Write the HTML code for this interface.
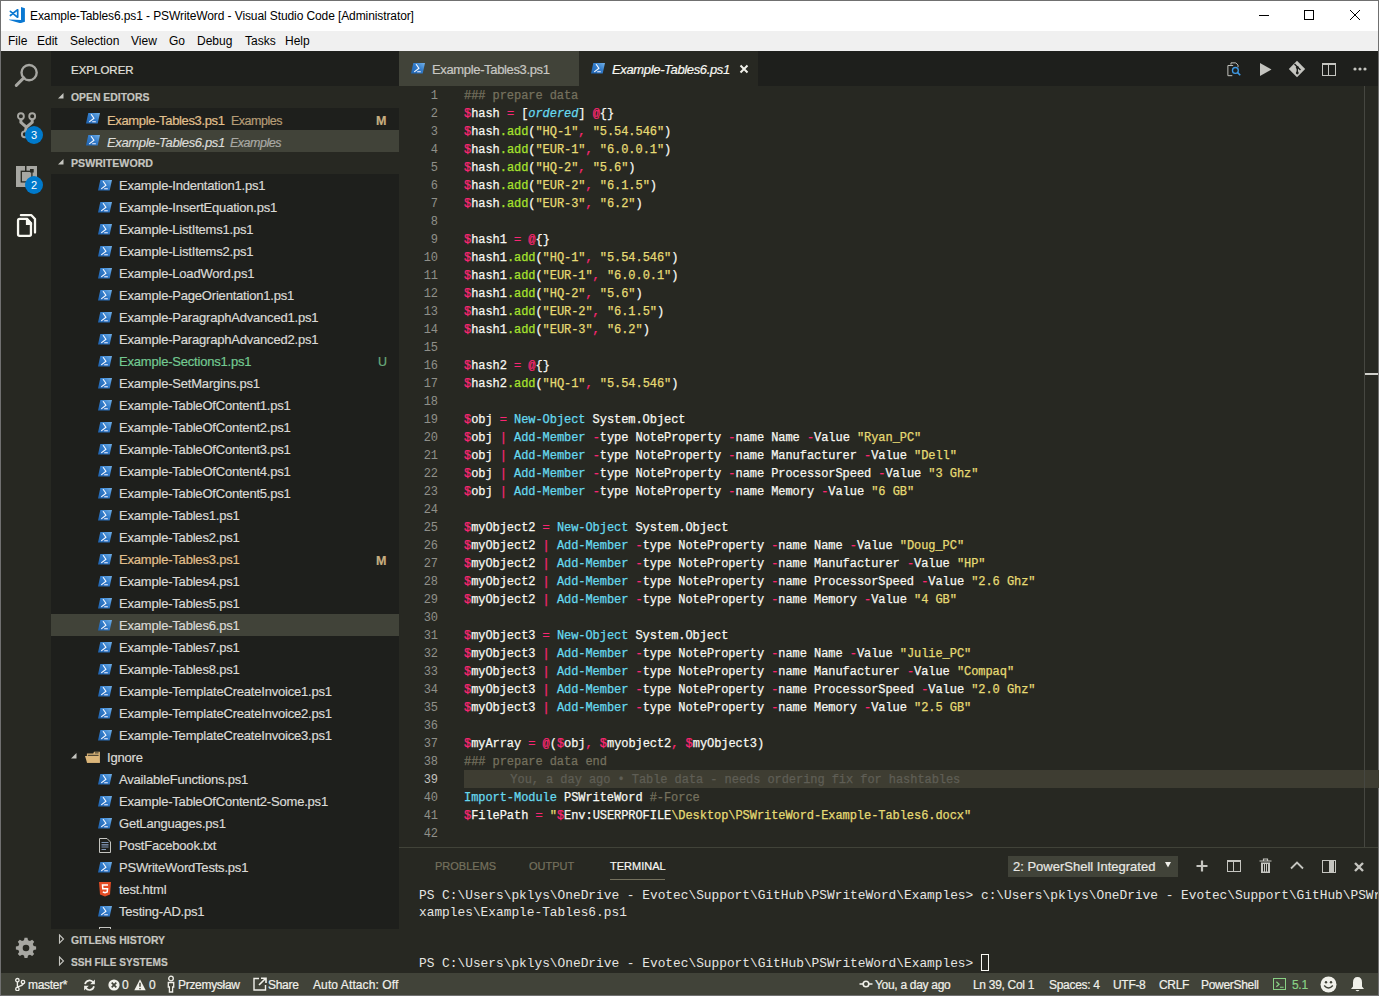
<!DOCTYPE html>
<html><head><meta charset="utf-8">
<style>
*{margin:0;padding:0;box-sizing:border-box}
html,body{width:1379px;height:996px;overflow:hidden;background:#707070;font-family:"Liberation Sans",sans-serif}
.ab{position:absolute}
.t{position:absolute;white-space:pre;font-family:"Liberation Sans",sans-serif;-webkit-text-stroke:0.2px currentColor}
.m{position:absolute;white-space:pre;font-family:"Liberation Mono",monospace;-webkit-text-stroke:0.25px currentColor}
svg{display:block}
#title{left:1px;top:1px;width:1377px;height:30px;background:#fff}
#menu{left:1px;top:31px;width:1377px;height:20px;background:#f0f0f0}
#act{left:1px;top:51px;width:50px;height:922px;background:#272822}
#side{left:51px;top:51px;width:348px;height:922px;background:#1e1f1c}
#tabs{left:399px;top:51px;width:979px;height:35px;background:#1e1f1c}
#editor{left:399px;top:86px;width:979px;height:761px;background:#272822;overflow:hidden}
#panel{left:399px;top:847px;width:979px;height:126px;background:#272822;border-top:1px solid #414339}
#status{left:1px;top:973px;width:1377px;height:22px;background:#414339}
.c .p{color:#f92672}.c .g{color:#a6e22e}.c .y{color:#e6db74}.c .b{color:#66d9ef}.c .cm{color:#75715e}.c .i{font-style:italic}
</style></head><body>
<div id="title" class="ab"></div>
<div id="menu" class="ab"></div>
<div id="act" class="ab"></div>
<div id="side" class="ab"></div>
<div id="tabs" class="ab"></div>
<div id="editor" class="ab"></div>
<div id="panel" class="ab"></div>
<div id="status" class="ab"></div>

<div class="ab" style="left:6px;top:4px"><svg width="24" height="22" viewBox="0 0 24 22"><polygon points="15,3 18.9,4.3 18.9,17.7 15,18.9" fill="#0a78d2"/><polygon points="3.1,15.4 15,15.9 15,18.9 13.5,18.9 3.1,15.9" fill="#0a78d2"/><path d="M4.4 7.3 L11.3 13.1 M4.4 11.5 L11.3 5.8 M11.7 5.8 V13.1" fill="none" stroke="#0a78d2" stroke-width="1.7" stroke-linecap="round"/></svg></div>
<div class="t" style="left:30px;top:5.84px;font-size:12px;line-height:20px;color:#000;font-weight:normal;font-style:normal;letter-spacing:-0.1px;-webkit-text-stroke:0">Example-Tables6.ps1 - PSWriteWord - Visual Studio Code [Administrator]</div>
<div class="ab" style="left:1259px;top:15px;width:10px;height:1px;background:#000"></div>
<div class="ab" style="left:1304px;top:10px;width:10px;height:10px;border:1px solid #000"></div>
<div class="ab" style="left:1349px;top:9px"><svg width="12" height="12" viewBox="0 0 12 12"><path d="M1 1 L11 11 M11 1 L1 11" stroke="#000" stroke-width="1"/></svg></div>
<div class="t" style="left:8px;top:30.84px;font-size:12px;line-height:20px;color:#000;font-weight:normal;font-style:normal;letter-spacing:0px;-webkit-text-stroke:0">File</div>
<div class="t" style="left:37px;top:30.84px;font-size:12px;line-height:20px;color:#000;font-weight:normal;font-style:normal;letter-spacing:0px;-webkit-text-stroke:0">Edit</div>
<div class="t" style="left:70px;top:30.84px;font-size:12px;line-height:20px;color:#000;font-weight:normal;font-style:normal;letter-spacing:0px;-webkit-text-stroke:0">Selection</div>
<div class="t" style="left:131px;top:30.84px;font-size:12px;line-height:20px;color:#000;font-weight:normal;font-style:normal;letter-spacing:0px;-webkit-text-stroke:0">View</div>
<div class="t" style="left:169px;top:30.84px;font-size:12px;line-height:20px;color:#000;font-weight:normal;font-style:normal;letter-spacing:0px;-webkit-text-stroke:0">Go</div>
<div class="t" style="left:197px;top:30.84px;font-size:12px;line-height:20px;color:#000;font-weight:normal;font-style:normal;letter-spacing:0px;-webkit-text-stroke:0">Debug</div>
<div class="t" style="left:245px;top:30.84px;font-size:12px;line-height:20px;color:#000;font-weight:normal;font-style:normal;letter-spacing:0px;-webkit-text-stroke:0">Tasks</div>
<div class="t" style="left:285px;top:30.84px;font-size:12px;line-height:20px;color:#000;font-weight:normal;font-style:normal;letter-spacing:0px;-webkit-text-stroke:0">Help</div>
<div class="ab" style="left:14px;top:63px"><svg width="24" height="24" viewBox="0 0 24 24"><circle cx="15.1" cy="9.6" r="7.6" fill="none" stroke="#a7a7a2" stroke-width="2.4"/><line x1="9.8" y1="14.9" x2="2.3" y2="22.4" stroke="#a7a7a2" stroke-width="2.9" stroke-linecap="round"/></svg></div>
<div class="ab" style="left:14px;top:108px"><svg width="24" height="32" viewBox="0 0 24 32"><circle cx="6.9" cy="8.2" r="2.95" fill="none" stroke="#a7a7a2" stroke-width="1.9"/><circle cx="18.2" cy="8.2" r="2.95" fill="none" stroke="#a7a7a2" stroke-width="1.9"/><circle cx="10.8" cy="26.3" r="2.95" fill="none" stroke="#a7a7a2" stroke-width="1.9"/><path d="M6.9 10.8 V14.3 L12.4 19.2 L18.2 14.3 V10.8 M12.4 19 L11.3 23.5" fill="none" stroke="#a7a7a2" stroke-width="3"/></svg></div>
<div class="ab" style="left:25px;top:126px;width:18px;height:18px;border-radius:9px;background:#007acc;color:#fff;font:11px/18px Liberation Sans,sans-serif;text-align:center">3</div>
<div class="ab" style="left:16px;top:166px"><svg width="21" height="21" viewBox="0 0 21 21"><rect x="0" y="0" width="21" height="21" fill="#a7a7a2"/><rect x="9" y="0" width="1.5" height="5" fill="#272822"/><rect x="5.3" y="5.3" width="10.6" height="10.6" fill="#a7a7a2" stroke="#272822" stroke-width="1.3"/><rect x="14" y="3" width="3.7" height="3.5" fill="#272822"/></svg></div>
<div class="ab" style="left:25px;top:176px;width:18px;height:18px;border-radius:9px;background:#007acc;color:#fff;font:11px/18px Liberation Sans,sans-serif;text-align:center">2</div>
<div class="ab" style="left:11px;top:211px"><svg width="30" height="30" viewBox="0 0 30 30"><path d="M9.9 4.2 H20.4 L24 8 V21.5" fill="none" stroke="#f8f8f2" stroke-width="2.3" stroke-linecap="round" stroke-linejoin="round"/><path d="M7.05 9.5 Q7.05 7.95 8.6 7.95 H16 L19.95 12.3 V23.3 Q19.95 24.85 18.4 24.85 H8.6 Q7.05 24.85 7.05 23.3 Z" fill="none" stroke="#f8f8f2" stroke-width="2.3"/><polygon points="14.9,6.9 16.5,6.9 21.1,12 21.1,14 14.9,14" fill="#f8f8f2"/></svg></div>
<div class="ab" style="left:15px;top:937px"><svg width="22" height="22" viewBox="0 0 22 22"><g transform="translate(11,11)"><path d="M-1.6 -10 H1.6 L2.2 -7.3 L4.3 -6.4 L6.7 -7.9 L8.9 -5.7 L7.4 -3.3 L8.3 -1.2 L11 -0.6 V2.6 L8.3 3.2 L7.4 5.3 L8.9 7.7 L6.7 9.9 L4.3 8.4 L2.2 9.3 L1.6 12 H-1.6 L-2.2 9.3 L-4.3 8.4 L-6.7 9.9 L-8.9 7.7 L-7.4 5.3 L-8.3 3.2 L-11 2.6 V-0.6 L-8.3 -1.2 L-7.4 -3.3 L-8.9 -5.7 L-6.7 -7.9 L-4.3 -6.4 L-2.2 -7.3 Z" fill="#a7a7a2" transform="translate(0,-1) scale(0.92)"/><circle cx="0" cy="0" r="3.3" fill="#272822"/></g></svg></div>
<div class="t" style="left:71px;top:60.02px;font-size:11.5px;line-height:20px;color:#e0e0dc;font-weight:normal;font-style:normal;letter-spacing:0px;-webkit-text-stroke:0transform:scaleX(0.8);transform-origin:0 0;">EXPLORER</div>
<div class="ab" style="left:51px;top:86px;width:348px;height:22px;background:#272822"></div>
<div class="ab" style="left:51px;top:152px;width:348px;height:22px;background:#272822"></div>
<div class="ab" style="left:51px;top:929px;width:348px;height:44px;background:#272822"></div>
<div class="ab" style="left:57px;top:92px"><svg width="8" height="8" viewBox="0 0 8 8"><polygon points="6.5,1 6.5,6.5 1,6.5" fill="#c5c5c0"/></svg></div>
<div class="t" style="left:71px;top:87.19px;font-size:11px;line-height:20px;color:#c5c5c0;font-weight:bold;font-style:normal;letter-spacing:0px;transform:scaleX(0.945);transform-origin:0 0;">OPEN EDITORS</div>
<div class="ab" style="left:57px;top:158px"><svg width="8" height="8" viewBox="0 0 8 8"><polygon points="6.5,1 6.5,6.5 1,6.5" fill="#c5c5c0"/></svg></div>
<div class="t" style="left:71px;top:153.19px;font-size:11px;line-height:20px;color:#c5c5c0;font-weight:bold;font-style:normal;letter-spacing:0px;transform:scaleX(0.965);transform-origin:0 0;">PSWRITEWORD</div>
<div class="ab" style="left:58px;top:934px"><svg width="8" height="10" viewBox="0 0 8 10"><polygon points="1.5,1 5.5,5 1.5,9" fill="none" stroke="#c5c5c0" stroke-width="1.1"/></svg></div>
<div class="t" style="left:71px;top:930.19px;font-size:11px;line-height:20px;color:#c5c5c0;font-weight:bold;font-style:normal;letter-spacing:0px;transform:scaleX(0.95);transform-origin:0 0;">GITLENS HISTORY</div>
<div class="ab" style="left:58px;top:956px"><svg width="8" height="10" viewBox="0 0 8 10"><polygon points="1.5,1 5.5,5 1.5,9" fill="none" stroke="#c5c5c0" stroke-width="1.1"/></svg></div>
<div class="t" style="left:71px;top:952.19px;font-size:11px;line-height:20px;color:#c5c5c0;font-weight:bold;font-style:normal;letter-spacing:0px;transform:scaleX(0.92);transform-origin:0 0;">SSH FILE SYSTEMS</div>
<div class="ab" style="left:86px;top:113px"><svg class="ps" width="15" height="12" viewBox="0 0 15 12"><defs><linearGradient id="g1" x1="0" y1="1" x2="1" y2="0"><stop offset="0" stop-color="#1f62ae"/><stop offset="0.55" stop-color="#327ccb"/><stop offset="1" stop-color="#74b2e8"/></linearGradient></defs><polygon points="2.3,0 14,0 11.7,10.6 0,10.6" fill="url(#g1)"/><polyline points="5.3,1.5 8,5.3 3.6,8.6" fill="none" stroke="#f4f8ff" stroke-width="1.15" stroke-linecap="round" stroke-linejoin="round"/><line x1="6.6" y1="8.8" x2="9.4" y2="8.8" stroke="#eef" stroke-width="1.1" stroke-linecap="round"/></svg></div>
<div class="t" style="left:107px;top:110.50px;font-size:13px;line-height:20px;color:#e2c08d;font-weight:normal;font-style:normal;letter-spacing:-0.35px;">Example-Tables3.ps1</div>
<div class="t" style="left:231px;top:110.67px;font-size:12.5px;line-height:20px;color:#b59c76;font-weight:normal;font-style:normal;letter-spacing:-0.5px;">Examples</div>
<div class="t" style="left:376px;top:110.67px;font-size:12.5px;line-height:20px;color:#c9ad80;font-weight:bold;font-style:normal;letter-spacing:0px;">M</div>
<div class="ab" style="left:51px;top:130px;width:348px;height:22px;background:#414339"></div>
<div class="ab" style="left:86px;top:135px"><svg class="ps" width="15" height="12" viewBox="0 0 15 12"><defs><linearGradient id="g2" x1="0" y1="1" x2="1" y2="0"><stop offset="0" stop-color="#1f62ae"/><stop offset="0.55" stop-color="#327ccb"/><stop offset="1" stop-color="#74b2e8"/></linearGradient></defs><polygon points="2.3,0 14,0 11.7,10.6 0,10.6" fill="url(#g2)"/><polyline points="5.3,1.5 8,5.3 3.6,8.6" fill="none" stroke="#f4f8ff" stroke-width="1.15" stroke-linecap="round" stroke-linejoin="round"/><line x1="6.6" y1="8.8" x2="9.4" y2="8.8" stroke="#eef" stroke-width="1.1" stroke-linecap="round"/></svg></div>
<div class="t" style="left:107px;top:132.50px;font-size:13px;line-height:20px;color:#dcdcd8;font-weight:normal;font-style:italic;letter-spacing:-0.35px;">Example-Tables6.ps1</div>
<div class="t" style="left:230px;top:132.67px;font-size:12.5px;line-height:20px;color:#a9a9a4;font-weight:normal;font-style:italic;letter-spacing:-0.5px;">Examples</div>
<div class="ab" style="left:51px;top:174px;width:348px;height:755px;overflow:hidden">
<div class="ab" style="left:0px;top:440px;width:348px;height:22px;background:#414339"></div>
</div>
<div class="ab" style="left:98px;top:180px"><svg class="ps" width="15" height="12" viewBox="0 0 15 12"><defs><linearGradient id="g3" x1="0" y1="1" x2="1" y2="0"><stop offset="0" stop-color="#1f62ae"/><stop offset="0.55" stop-color="#327ccb"/><stop offset="1" stop-color="#74b2e8"/></linearGradient></defs><polygon points="2.3,0 14,0 11.7,10.6 0,10.6" fill="url(#g3)"/><polyline points="5.3,1.5 8,5.3 3.6,8.6" fill="none" stroke="#f4f8ff" stroke-width="1.15" stroke-linecap="round" stroke-linejoin="round"/><line x1="6.6" y1="8.8" x2="9.4" y2="8.8" stroke="#eef" stroke-width="1.1" stroke-linecap="round"/></svg></div>
<div class="t" style="left:119px;top:175.80px;font-size:13px;line-height:20px;color:#dadad6;font-weight:normal;font-style:normal;letter-spacing:-0.2px;">Example-Indentation1.ps1</div>
<div class="ab" style="left:98px;top:202px"><svg class="ps" width="15" height="12" viewBox="0 0 15 12"><defs><linearGradient id="g4" x1="0" y1="1" x2="1" y2="0"><stop offset="0" stop-color="#1f62ae"/><stop offset="0.55" stop-color="#327ccb"/><stop offset="1" stop-color="#74b2e8"/></linearGradient></defs><polygon points="2.3,0 14,0 11.7,10.6 0,10.6" fill="url(#g4)"/><polyline points="5.3,1.5 8,5.3 3.6,8.6" fill="none" stroke="#f4f8ff" stroke-width="1.15" stroke-linecap="round" stroke-linejoin="round"/><line x1="6.6" y1="8.8" x2="9.4" y2="8.8" stroke="#eef" stroke-width="1.1" stroke-linecap="round"/></svg></div>
<div class="t" style="left:119px;top:197.80px;font-size:13px;line-height:20px;color:#dadad6;font-weight:normal;font-style:normal;letter-spacing:-0.2px;">Example-InsertEquation.ps1</div>
<div class="ab" style="left:98px;top:224px"><svg class="ps" width="15" height="12" viewBox="0 0 15 12"><defs><linearGradient id="g5" x1="0" y1="1" x2="1" y2="0"><stop offset="0" stop-color="#1f62ae"/><stop offset="0.55" stop-color="#327ccb"/><stop offset="1" stop-color="#74b2e8"/></linearGradient></defs><polygon points="2.3,0 14,0 11.7,10.6 0,10.6" fill="url(#g5)"/><polyline points="5.3,1.5 8,5.3 3.6,8.6" fill="none" stroke="#f4f8ff" stroke-width="1.15" stroke-linecap="round" stroke-linejoin="round"/><line x1="6.6" y1="8.8" x2="9.4" y2="8.8" stroke="#eef" stroke-width="1.1" stroke-linecap="round"/></svg></div>
<div class="t" style="left:119px;top:219.80px;font-size:13px;line-height:20px;color:#dadad6;font-weight:normal;font-style:normal;letter-spacing:-0.2px;">Example-ListItems1.ps1</div>
<div class="ab" style="left:98px;top:246px"><svg class="ps" width="15" height="12" viewBox="0 0 15 12"><defs><linearGradient id="g6" x1="0" y1="1" x2="1" y2="0"><stop offset="0" stop-color="#1f62ae"/><stop offset="0.55" stop-color="#327ccb"/><stop offset="1" stop-color="#74b2e8"/></linearGradient></defs><polygon points="2.3,0 14,0 11.7,10.6 0,10.6" fill="url(#g6)"/><polyline points="5.3,1.5 8,5.3 3.6,8.6" fill="none" stroke="#f4f8ff" stroke-width="1.15" stroke-linecap="round" stroke-linejoin="round"/><line x1="6.6" y1="8.8" x2="9.4" y2="8.8" stroke="#eef" stroke-width="1.1" stroke-linecap="round"/></svg></div>
<div class="t" style="left:119px;top:241.80px;font-size:13px;line-height:20px;color:#dadad6;font-weight:normal;font-style:normal;letter-spacing:-0.2px;">Example-ListItems2.ps1</div>
<div class="ab" style="left:98px;top:268px"><svg class="ps" width="15" height="12" viewBox="0 0 15 12"><defs><linearGradient id="g7" x1="0" y1="1" x2="1" y2="0"><stop offset="0" stop-color="#1f62ae"/><stop offset="0.55" stop-color="#327ccb"/><stop offset="1" stop-color="#74b2e8"/></linearGradient></defs><polygon points="2.3,0 14,0 11.7,10.6 0,10.6" fill="url(#g7)"/><polyline points="5.3,1.5 8,5.3 3.6,8.6" fill="none" stroke="#f4f8ff" stroke-width="1.15" stroke-linecap="round" stroke-linejoin="round"/><line x1="6.6" y1="8.8" x2="9.4" y2="8.8" stroke="#eef" stroke-width="1.1" stroke-linecap="round"/></svg></div>
<div class="t" style="left:119px;top:263.80px;font-size:13px;line-height:20px;color:#dadad6;font-weight:normal;font-style:normal;letter-spacing:-0.2px;">Example-LoadWord.ps1</div>
<div class="ab" style="left:98px;top:290px"><svg class="ps" width="15" height="12" viewBox="0 0 15 12"><defs><linearGradient id="g8" x1="0" y1="1" x2="1" y2="0"><stop offset="0" stop-color="#1f62ae"/><stop offset="0.55" stop-color="#327ccb"/><stop offset="1" stop-color="#74b2e8"/></linearGradient></defs><polygon points="2.3,0 14,0 11.7,10.6 0,10.6" fill="url(#g8)"/><polyline points="5.3,1.5 8,5.3 3.6,8.6" fill="none" stroke="#f4f8ff" stroke-width="1.15" stroke-linecap="round" stroke-linejoin="round"/><line x1="6.6" y1="8.8" x2="9.4" y2="8.8" stroke="#eef" stroke-width="1.1" stroke-linecap="round"/></svg></div>
<div class="t" style="left:119px;top:285.80px;font-size:13px;line-height:20px;color:#dadad6;font-weight:normal;font-style:normal;letter-spacing:-0.2px;">Example-PageOrientation1.ps1</div>
<div class="ab" style="left:98px;top:312px"><svg class="ps" width="15" height="12" viewBox="0 0 15 12"><defs><linearGradient id="g9" x1="0" y1="1" x2="1" y2="0"><stop offset="0" stop-color="#1f62ae"/><stop offset="0.55" stop-color="#327ccb"/><stop offset="1" stop-color="#74b2e8"/></linearGradient></defs><polygon points="2.3,0 14,0 11.7,10.6 0,10.6" fill="url(#g9)"/><polyline points="5.3,1.5 8,5.3 3.6,8.6" fill="none" stroke="#f4f8ff" stroke-width="1.15" stroke-linecap="round" stroke-linejoin="round"/><line x1="6.6" y1="8.8" x2="9.4" y2="8.8" stroke="#eef" stroke-width="1.1" stroke-linecap="round"/></svg></div>
<div class="t" style="left:119px;top:307.80px;font-size:13px;line-height:20px;color:#dadad6;font-weight:normal;font-style:normal;letter-spacing:-0.2px;">Example-ParagraphAdvanced1.ps1</div>
<div class="ab" style="left:98px;top:334px"><svg class="ps" width="15" height="12" viewBox="0 0 15 12"><defs><linearGradient id="g10" x1="0" y1="1" x2="1" y2="0"><stop offset="0" stop-color="#1f62ae"/><stop offset="0.55" stop-color="#327ccb"/><stop offset="1" stop-color="#74b2e8"/></linearGradient></defs><polygon points="2.3,0 14,0 11.7,10.6 0,10.6" fill="url(#g10)"/><polyline points="5.3,1.5 8,5.3 3.6,8.6" fill="none" stroke="#f4f8ff" stroke-width="1.15" stroke-linecap="round" stroke-linejoin="round"/><line x1="6.6" y1="8.8" x2="9.4" y2="8.8" stroke="#eef" stroke-width="1.1" stroke-linecap="round"/></svg></div>
<div class="t" style="left:119px;top:329.80px;font-size:13px;line-height:20px;color:#dadad6;font-weight:normal;font-style:normal;letter-spacing:-0.2px;">Example-ParagraphAdvanced2.ps1</div>
<div class="ab" style="left:98px;top:356px"><svg class="ps" width="15" height="12" viewBox="0 0 15 12"><defs><linearGradient id="g11" x1="0" y1="1" x2="1" y2="0"><stop offset="0" stop-color="#1f62ae"/><stop offset="0.55" stop-color="#327ccb"/><stop offset="1" stop-color="#74b2e8"/></linearGradient></defs><polygon points="2.3,0 14,0 11.7,10.6 0,10.6" fill="url(#g11)"/><polyline points="5.3,1.5 8,5.3 3.6,8.6" fill="none" stroke="#f4f8ff" stroke-width="1.15" stroke-linecap="round" stroke-linejoin="round"/><line x1="6.6" y1="8.8" x2="9.4" y2="8.8" stroke="#eef" stroke-width="1.1" stroke-linecap="round"/></svg></div>
<div class="t" style="left:119px;top:351.80px;font-size:13px;line-height:20px;color:#73c991;font-weight:normal;font-style:normal;letter-spacing:-0.2px;">Example-Sections1.ps1</div>
<div class="ab" style="left:98px;top:378px"><svg class="ps" width="15" height="12" viewBox="0 0 15 12"><defs><linearGradient id="g12" x1="0" y1="1" x2="1" y2="0"><stop offset="0" stop-color="#1f62ae"/><stop offset="0.55" stop-color="#327ccb"/><stop offset="1" stop-color="#74b2e8"/></linearGradient></defs><polygon points="2.3,0 14,0 11.7,10.6 0,10.6" fill="url(#g12)"/><polyline points="5.3,1.5 8,5.3 3.6,8.6" fill="none" stroke="#f4f8ff" stroke-width="1.15" stroke-linecap="round" stroke-linejoin="round"/><line x1="6.6" y1="8.8" x2="9.4" y2="8.8" stroke="#eef" stroke-width="1.1" stroke-linecap="round"/></svg></div>
<div class="t" style="left:119px;top:373.80px;font-size:13px;line-height:20px;color:#dadad6;font-weight:normal;font-style:normal;letter-spacing:-0.2px;">Example-SetMargins.ps1</div>
<div class="ab" style="left:98px;top:400px"><svg class="ps" width="15" height="12" viewBox="0 0 15 12"><defs><linearGradient id="g13" x1="0" y1="1" x2="1" y2="0"><stop offset="0" stop-color="#1f62ae"/><stop offset="0.55" stop-color="#327ccb"/><stop offset="1" stop-color="#74b2e8"/></linearGradient></defs><polygon points="2.3,0 14,0 11.7,10.6 0,10.6" fill="url(#g13)"/><polyline points="5.3,1.5 8,5.3 3.6,8.6" fill="none" stroke="#f4f8ff" stroke-width="1.15" stroke-linecap="round" stroke-linejoin="round"/><line x1="6.6" y1="8.8" x2="9.4" y2="8.8" stroke="#eef" stroke-width="1.1" stroke-linecap="round"/></svg></div>
<div class="t" style="left:119px;top:395.80px;font-size:13px;line-height:20px;color:#dadad6;font-weight:normal;font-style:normal;letter-spacing:-0.2px;">Example-TableOfContent1.ps1</div>
<div class="ab" style="left:98px;top:422px"><svg class="ps" width="15" height="12" viewBox="0 0 15 12"><defs><linearGradient id="g14" x1="0" y1="1" x2="1" y2="0"><stop offset="0" stop-color="#1f62ae"/><stop offset="0.55" stop-color="#327ccb"/><stop offset="1" stop-color="#74b2e8"/></linearGradient></defs><polygon points="2.3,0 14,0 11.7,10.6 0,10.6" fill="url(#g14)"/><polyline points="5.3,1.5 8,5.3 3.6,8.6" fill="none" stroke="#f4f8ff" stroke-width="1.15" stroke-linecap="round" stroke-linejoin="round"/><line x1="6.6" y1="8.8" x2="9.4" y2="8.8" stroke="#eef" stroke-width="1.1" stroke-linecap="round"/></svg></div>
<div class="t" style="left:119px;top:417.80px;font-size:13px;line-height:20px;color:#dadad6;font-weight:normal;font-style:normal;letter-spacing:-0.2px;">Example-TableOfContent2.ps1</div>
<div class="ab" style="left:98px;top:444px"><svg class="ps" width="15" height="12" viewBox="0 0 15 12"><defs><linearGradient id="g15" x1="0" y1="1" x2="1" y2="0"><stop offset="0" stop-color="#1f62ae"/><stop offset="0.55" stop-color="#327ccb"/><stop offset="1" stop-color="#74b2e8"/></linearGradient></defs><polygon points="2.3,0 14,0 11.7,10.6 0,10.6" fill="url(#g15)"/><polyline points="5.3,1.5 8,5.3 3.6,8.6" fill="none" stroke="#f4f8ff" stroke-width="1.15" stroke-linecap="round" stroke-linejoin="round"/><line x1="6.6" y1="8.8" x2="9.4" y2="8.8" stroke="#eef" stroke-width="1.1" stroke-linecap="round"/></svg></div>
<div class="t" style="left:119px;top:439.80px;font-size:13px;line-height:20px;color:#dadad6;font-weight:normal;font-style:normal;letter-spacing:-0.2px;">Example-TableOfContent3.ps1</div>
<div class="ab" style="left:98px;top:466px"><svg class="ps" width="15" height="12" viewBox="0 0 15 12"><defs><linearGradient id="g16" x1="0" y1="1" x2="1" y2="0"><stop offset="0" stop-color="#1f62ae"/><stop offset="0.55" stop-color="#327ccb"/><stop offset="1" stop-color="#74b2e8"/></linearGradient></defs><polygon points="2.3,0 14,0 11.7,10.6 0,10.6" fill="url(#g16)"/><polyline points="5.3,1.5 8,5.3 3.6,8.6" fill="none" stroke="#f4f8ff" stroke-width="1.15" stroke-linecap="round" stroke-linejoin="round"/><line x1="6.6" y1="8.8" x2="9.4" y2="8.8" stroke="#eef" stroke-width="1.1" stroke-linecap="round"/></svg></div>
<div class="t" style="left:119px;top:461.80px;font-size:13px;line-height:20px;color:#dadad6;font-weight:normal;font-style:normal;letter-spacing:-0.2px;">Example-TableOfContent4.ps1</div>
<div class="ab" style="left:98px;top:488px"><svg class="ps" width="15" height="12" viewBox="0 0 15 12"><defs><linearGradient id="g17" x1="0" y1="1" x2="1" y2="0"><stop offset="0" stop-color="#1f62ae"/><stop offset="0.55" stop-color="#327ccb"/><stop offset="1" stop-color="#74b2e8"/></linearGradient></defs><polygon points="2.3,0 14,0 11.7,10.6 0,10.6" fill="url(#g17)"/><polyline points="5.3,1.5 8,5.3 3.6,8.6" fill="none" stroke="#f4f8ff" stroke-width="1.15" stroke-linecap="round" stroke-linejoin="round"/><line x1="6.6" y1="8.8" x2="9.4" y2="8.8" stroke="#eef" stroke-width="1.1" stroke-linecap="round"/></svg></div>
<div class="t" style="left:119px;top:483.80px;font-size:13px;line-height:20px;color:#dadad6;font-weight:normal;font-style:normal;letter-spacing:-0.2px;">Example-TableOfContent5.ps1</div>
<div class="ab" style="left:98px;top:510px"><svg class="ps" width="15" height="12" viewBox="0 0 15 12"><defs><linearGradient id="g18" x1="0" y1="1" x2="1" y2="0"><stop offset="0" stop-color="#1f62ae"/><stop offset="0.55" stop-color="#327ccb"/><stop offset="1" stop-color="#74b2e8"/></linearGradient></defs><polygon points="2.3,0 14,0 11.7,10.6 0,10.6" fill="url(#g18)"/><polyline points="5.3,1.5 8,5.3 3.6,8.6" fill="none" stroke="#f4f8ff" stroke-width="1.15" stroke-linecap="round" stroke-linejoin="round"/><line x1="6.6" y1="8.8" x2="9.4" y2="8.8" stroke="#eef" stroke-width="1.1" stroke-linecap="round"/></svg></div>
<div class="t" style="left:119px;top:505.80px;font-size:13px;line-height:20px;color:#dadad6;font-weight:normal;font-style:normal;letter-spacing:-0.2px;">Example-Tables1.ps1</div>
<div class="ab" style="left:98px;top:532px"><svg class="ps" width="15" height="12" viewBox="0 0 15 12"><defs><linearGradient id="g19" x1="0" y1="1" x2="1" y2="0"><stop offset="0" stop-color="#1f62ae"/><stop offset="0.55" stop-color="#327ccb"/><stop offset="1" stop-color="#74b2e8"/></linearGradient></defs><polygon points="2.3,0 14,0 11.7,10.6 0,10.6" fill="url(#g19)"/><polyline points="5.3,1.5 8,5.3 3.6,8.6" fill="none" stroke="#f4f8ff" stroke-width="1.15" stroke-linecap="round" stroke-linejoin="round"/><line x1="6.6" y1="8.8" x2="9.4" y2="8.8" stroke="#eef" stroke-width="1.1" stroke-linecap="round"/></svg></div>
<div class="t" style="left:119px;top:527.80px;font-size:13px;line-height:20px;color:#dadad6;font-weight:normal;font-style:normal;letter-spacing:-0.2px;">Example-Tables2.ps1</div>
<div class="ab" style="left:98px;top:554px"><svg class="ps" width="15" height="12" viewBox="0 0 15 12"><defs><linearGradient id="g20" x1="0" y1="1" x2="1" y2="0"><stop offset="0" stop-color="#1f62ae"/><stop offset="0.55" stop-color="#327ccb"/><stop offset="1" stop-color="#74b2e8"/></linearGradient></defs><polygon points="2.3,0 14,0 11.7,10.6 0,10.6" fill="url(#g20)"/><polyline points="5.3,1.5 8,5.3 3.6,8.6" fill="none" stroke="#f4f8ff" stroke-width="1.15" stroke-linecap="round" stroke-linejoin="round"/><line x1="6.6" y1="8.8" x2="9.4" y2="8.8" stroke="#eef" stroke-width="1.1" stroke-linecap="round"/></svg></div>
<div class="t" style="left:119px;top:549.80px;font-size:13px;line-height:20px;color:#e2c08d;font-weight:normal;font-style:normal;letter-spacing:-0.2px;">Example-Tables3.ps1</div>
<div class="ab" style="left:98px;top:576px"><svg class="ps" width="15" height="12" viewBox="0 0 15 12"><defs><linearGradient id="g21" x1="0" y1="1" x2="1" y2="0"><stop offset="0" stop-color="#1f62ae"/><stop offset="0.55" stop-color="#327ccb"/><stop offset="1" stop-color="#74b2e8"/></linearGradient></defs><polygon points="2.3,0 14,0 11.7,10.6 0,10.6" fill="url(#g21)"/><polyline points="5.3,1.5 8,5.3 3.6,8.6" fill="none" stroke="#f4f8ff" stroke-width="1.15" stroke-linecap="round" stroke-linejoin="round"/><line x1="6.6" y1="8.8" x2="9.4" y2="8.8" stroke="#eef" stroke-width="1.1" stroke-linecap="round"/></svg></div>
<div class="t" style="left:119px;top:571.80px;font-size:13px;line-height:20px;color:#dadad6;font-weight:normal;font-style:normal;letter-spacing:-0.2px;">Example-Tables4.ps1</div>
<div class="ab" style="left:98px;top:598px"><svg class="ps" width="15" height="12" viewBox="0 0 15 12"><defs><linearGradient id="g22" x1="0" y1="1" x2="1" y2="0"><stop offset="0" stop-color="#1f62ae"/><stop offset="0.55" stop-color="#327ccb"/><stop offset="1" stop-color="#74b2e8"/></linearGradient></defs><polygon points="2.3,0 14,0 11.7,10.6 0,10.6" fill="url(#g22)"/><polyline points="5.3,1.5 8,5.3 3.6,8.6" fill="none" stroke="#f4f8ff" stroke-width="1.15" stroke-linecap="round" stroke-linejoin="round"/><line x1="6.6" y1="8.8" x2="9.4" y2="8.8" stroke="#eef" stroke-width="1.1" stroke-linecap="round"/></svg></div>
<div class="t" style="left:119px;top:593.80px;font-size:13px;line-height:20px;color:#dadad6;font-weight:normal;font-style:normal;letter-spacing:-0.2px;">Example-Tables5.ps1</div>
<div class="ab" style="left:98px;top:620px"><svg class="ps" width="15" height="12" viewBox="0 0 15 12"><defs><linearGradient id="g23" x1="0" y1="1" x2="1" y2="0"><stop offset="0" stop-color="#1f62ae"/><stop offset="0.55" stop-color="#327ccb"/><stop offset="1" stop-color="#74b2e8"/></linearGradient></defs><polygon points="2.3,0 14,0 11.7,10.6 0,10.6" fill="url(#g23)"/><polyline points="5.3,1.5 8,5.3 3.6,8.6" fill="none" stroke="#f4f8ff" stroke-width="1.15" stroke-linecap="round" stroke-linejoin="round"/><line x1="6.6" y1="8.8" x2="9.4" y2="8.8" stroke="#eef" stroke-width="1.1" stroke-linecap="round"/></svg></div>
<div class="t" style="left:119px;top:615.80px;font-size:13px;line-height:20px;color:#dadad6;font-weight:normal;font-style:normal;letter-spacing:-0.2px;">Example-Tables6.ps1</div>
<div class="ab" style="left:98px;top:642px"><svg class="ps" width="15" height="12" viewBox="0 0 15 12"><defs><linearGradient id="g24" x1="0" y1="1" x2="1" y2="0"><stop offset="0" stop-color="#1f62ae"/><stop offset="0.55" stop-color="#327ccb"/><stop offset="1" stop-color="#74b2e8"/></linearGradient></defs><polygon points="2.3,0 14,0 11.7,10.6 0,10.6" fill="url(#g24)"/><polyline points="5.3,1.5 8,5.3 3.6,8.6" fill="none" stroke="#f4f8ff" stroke-width="1.15" stroke-linecap="round" stroke-linejoin="round"/><line x1="6.6" y1="8.8" x2="9.4" y2="8.8" stroke="#eef" stroke-width="1.1" stroke-linecap="round"/></svg></div>
<div class="t" style="left:119px;top:637.80px;font-size:13px;line-height:20px;color:#dadad6;font-weight:normal;font-style:normal;letter-spacing:-0.2px;">Example-Tables7.ps1</div>
<div class="ab" style="left:98px;top:664px"><svg class="ps" width="15" height="12" viewBox="0 0 15 12"><defs><linearGradient id="g25" x1="0" y1="1" x2="1" y2="0"><stop offset="0" stop-color="#1f62ae"/><stop offset="0.55" stop-color="#327ccb"/><stop offset="1" stop-color="#74b2e8"/></linearGradient></defs><polygon points="2.3,0 14,0 11.7,10.6 0,10.6" fill="url(#g25)"/><polyline points="5.3,1.5 8,5.3 3.6,8.6" fill="none" stroke="#f4f8ff" stroke-width="1.15" stroke-linecap="round" stroke-linejoin="round"/><line x1="6.6" y1="8.8" x2="9.4" y2="8.8" stroke="#eef" stroke-width="1.1" stroke-linecap="round"/></svg></div>
<div class="t" style="left:119px;top:659.80px;font-size:13px;line-height:20px;color:#dadad6;font-weight:normal;font-style:normal;letter-spacing:-0.2px;">Example-Tables8.ps1</div>
<div class="ab" style="left:98px;top:686px"><svg class="ps" width="15" height="12" viewBox="0 0 15 12"><defs><linearGradient id="g26" x1="0" y1="1" x2="1" y2="0"><stop offset="0" stop-color="#1f62ae"/><stop offset="0.55" stop-color="#327ccb"/><stop offset="1" stop-color="#74b2e8"/></linearGradient></defs><polygon points="2.3,0 14,0 11.7,10.6 0,10.6" fill="url(#g26)"/><polyline points="5.3,1.5 8,5.3 3.6,8.6" fill="none" stroke="#f4f8ff" stroke-width="1.15" stroke-linecap="round" stroke-linejoin="round"/><line x1="6.6" y1="8.8" x2="9.4" y2="8.8" stroke="#eef" stroke-width="1.1" stroke-linecap="round"/></svg></div>
<div class="t" style="left:119px;top:681.80px;font-size:13px;line-height:20px;color:#dadad6;font-weight:normal;font-style:normal;letter-spacing:-0.2px;">Example-TemplateCreateInvoice1.ps1</div>
<div class="ab" style="left:98px;top:708px"><svg class="ps" width="15" height="12" viewBox="0 0 15 12"><defs><linearGradient id="g27" x1="0" y1="1" x2="1" y2="0"><stop offset="0" stop-color="#1f62ae"/><stop offset="0.55" stop-color="#327ccb"/><stop offset="1" stop-color="#74b2e8"/></linearGradient></defs><polygon points="2.3,0 14,0 11.7,10.6 0,10.6" fill="url(#g27)"/><polyline points="5.3,1.5 8,5.3 3.6,8.6" fill="none" stroke="#f4f8ff" stroke-width="1.15" stroke-linecap="round" stroke-linejoin="round"/><line x1="6.6" y1="8.8" x2="9.4" y2="8.8" stroke="#eef" stroke-width="1.1" stroke-linecap="round"/></svg></div>
<div class="t" style="left:119px;top:703.80px;font-size:13px;line-height:20px;color:#dadad6;font-weight:normal;font-style:normal;letter-spacing:-0.2px;">Example-TemplateCreateInvoice2.ps1</div>
<div class="ab" style="left:98px;top:730px"><svg class="ps" width="15" height="12" viewBox="0 0 15 12"><defs><linearGradient id="g28" x1="0" y1="1" x2="1" y2="0"><stop offset="0" stop-color="#1f62ae"/><stop offset="0.55" stop-color="#327ccb"/><stop offset="1" stop-color="#74b2e8"/></linearGradient></defs><polygon points="2.3,0 14,0 11.7,10.6 0,10.6" fill="url(#g28)"/><polyline points="5.3,1.5 8,5.3 3.6,8.6" fill="none" stroke="#f4f8ff" stroke-width="1.15" stroke-linecap="round" stroke-linejoin="round"/><line x1="6.6" y1="8.8" x2="9.4" y2="8.8" stroke="#eef" stroke-width="1.1" stroke-linecap="round"/></svg></div>
<div class="t" style="left:119px;top:725.80px;font-size:13px;line-height:20px;color:#dadad6;font-weight:normal;font-style:normal;letter-spacing:-0.2px;">Example-TemplateCreateInvoice3.ps1</div>
<div class="ab" style="left:70px;top:752px"><svg width="8" height="8" viewBox="0 0 8 8"><polygon points="6.5,1 6.5,6.5 1,6.5" fill="#c5c5c0"/></svg></div>
<div class="ab" style="left:85px;top:751px"><svg width="16" height="13" viewBox="0 0 16 13"><path d="M1.9 2.4 H8.3 L9 0.7 H14.9 V11.8 H1.9 Z" fill="#dcb67a"/><path d="M2.8 4.3 H13.6 M9.9 1.9 H13.6" stroke="#1e1f1c" stroke-width="0.9"/><polygon points="0,4.9 13,4.9 14.9,11.8 2.1,11.8" fill="#dcb67a"/></svg></div>
<div class="t" style="left:107px;top:747.80px;font-size:13px;line-height:20px;color:#dadad6;font-weight:normal;font-style:normal;letter-spacing:-0.2px;">Ignore</div>
<div class="ab" style="left:98px;top:774px"><svg class="ps" width="15" height="12" viewBox="0 0 15 12"><defs><linearGradient id="g29" x1="0" y1="1" x2="1" y2="0"><stop offset="0" stop-color="#1f62ae"/><stop offset="0.55" stop-color="#327ccb"/><stop offset="1" stop-color="#74b2e8"/></linearGradient></defs><polygon points="2.3,0 14,0 11.7,10.6 0,10.6" fill="url(#g29)"/><polyline points="5.3,1.5 8,5.3 3.6,8.6" fill="none" stroke="#f4f8ff" stroke-width="1.15" stroke-linecap="round" stroke-linejoin="round"/><line x1="6.6" y1="8.8" x2="9.4" y2="8.8" stroke="#eef" stroke-width="1.1" stroke-linecap="round"/></svg></div>
<div class="t" style="left:119px;top:769.80px;font-size:13px;line-height:20px;color:#dadad6;font-weight:normal;font-style:normal;letter-spacing:-0.2px;">AvailableFunctions.ps1</div>
<div class="ab" style="left:98px;top:796px"><svg class="ps" width="15" height="12" viewBox="0 0 15 12"><defs><linearGradient id="g30" x1="0" y1="1" x2="1" y2="0"><stop offset="0" stop-color="#1f62ae"/><stop offset="0.55" stop-color="#327ccb"/><stop offset="1" stop-color="#74b2e8"/></linearGradient></defs><polygon points="2.3,0 14,0 11.7,10.6 0,10.6" fill="url(#g30)"/><polyline points="5.3,1.5 8,5.3 3.6,8.6" fill="none" stroke="#f4f8ff" stroke-width="1.15" stroke-linecap="round" stroke-linejoin="round"/><line x1="6.6" y1="8.8" x2="9.4" y2="8.8" stroke="#eef" stroke-width="1.1" stroke-linecap="round"/></svg></div>
<div class="t" style="left:119px;top:791.80px;font-size:13px;line-height:20px;color:#dadad6;font-weight:normal;font-style:normal;letter-spacing:-0.2px;">Example-TableOfContent2-Some.ps1</div>
<div class="ab" style="left:98px;top:818px"><svg class="ps" width="15" height="12" viewBox="0 0 15 12"><defs><linearGradient id="g31" x1="0" y1="1" x2="1" y2="0"><stop offset="0" stop-color="#1f62ae"/><stop offset="0.55" stop-color="#327ccb"/><stop offset="1" stop-color="#74b2e8"/></linearGradient></defs><polygon points="2.3,0 14,0 11.7,10.6 0,10.6" fill="url(#g31)"/><polyline points="5.3,1.5 8,5.3 3.6,8.6" fill="none" stroke="#f4f8ff" stroke-width="1.15" stroke-linecap="round" stroke-linejoin="round"/><line x1="6.6" y1="8.8" x2="9.4" y2="8.8" stroke="#eef" stroke-width="1.1" stroke-linecap="round"/></svg></div>
<div class="t" style="left:119px;top:813.80px;font-size:13px;line-height:20px;color:#dadad6;font-weight:normal;font-style:normal;letter-spacing:-0.2px;">GetLanguages.ps1</div>
<div class="ab" style="left:99px;top:838px"><svg width="12" height="15" viewBox="0 0 12 15"><path d="M0.5 0.5 H8 L11.5 4 V14.5 H0.5 Z" fill="none" stroke="#c5c5c0" stroke-width="1"/><path d="M2.5 4.5 H9.5 M2.5 9 H9.5 M2.5 11.5 H7" stroke="#7f95b5" stroke-width="1"/><path d="M2.5 6.8 H9.5" stroke="#6f819c" stroke-width="1.6"/></svg></div>
<div class="t" style="left:119px;top:835.80px;font-size:13px;line-height:20px;color:#dadad6;font-weight:normal;font-style:normal;letter-spacing:-0.2px;">PostFacebook.txt</div>
<div class="ab" style="left:98px;top:862px"><svg class="ps" width="15" height="12" viewBox="0 0 15 12"><defs><linearGradient id="g32" x1="0" y1="1" x2="1" y2="0"><stop offset="0" stop-color="#1f62ae"/><stop offset="0.55" stop-color="#327ccb"/><stop offset="1" stop-color="#74b2e8"/></linearGradient></defs><polygon points="2.3,0 14,0 11.7,10.6 0,10.6" fill="url(#g32)"/><polyline points="5.3,1.5 8,5.3 3.6,8.6" fill="none" stroke="#f4f8ff" stroke-width="1.15" stroke-linecap="round" stroke-linejoin="round"/><line x1="6.6" y1="8.8" x2="9.4" y2="8.8" stroke="#eef" stroke-width="1.1" stroke-linecap="round"/></svg></div>
<div class="t" style="left:119px;top:857.80px;font-size:13px;line-height:20px;color:#dadad6;font-weight:normal;font-style:normal;letter-spacing:-0.2px;">PSWriteWordTests.ps1</div>
<div class="ab" style="left:99px;top:882px"><svg width="12" height="15" viewBox="0 0 12 15"><path d="M0 0 H12 L11 12.5 L6 14.5 L1 12.5 Z" fill="#e44d26"/><path d="M9 3 H3.5 L3.8 6.8 H8.5 L8.2 10 L6 10.8 L3.8 10" fill="none" stroke="#fff" stroke-width="1.5"/></svg></div>
<div class="t" style="left:119px;top:879.80px;font-size:13px;line-height:20px;color:#dadad6;font-weight:normal;font-style:normal;letter-spacing:-0.2px;">test.html</div>
<div class="ab" style="left:98px;top:906px"><svg class="ps" width="15" height="12" viewBox="0 0 15 12"><defs><linearGradient id="g33" x1="0" y1="1" x2="1" y2="0"><stop offset="0" stop-color="#1f62ae"/><stop offset="0.55" stop-color="#327ccb"/><stop offset="1" stop-color="#74b2e8"/></linearGradient></defs><polygon points="2.3,0 14,0 11.7,10.6 0,10.6" fill="url(#g33)"/><polyline points="5.3,1.5 8,5.3 3.6,8.6" fill="none" stroke="#f4f8ff" stroke-width="1.15" stroke-linecap="round" stroke-linejoin="round"/><line x1="6.6" y1="8.8" x2="9.4" y2="8.8" stroke="#eef" stroke-width="1.1" stroke-linecap="round"/></svg></div>
<div class="t" style="left:119px;top:901.80px;font-size:13px;line-height:20px;color:#dadad6;font-weight:normal;font-style:normal;letter-spacing:-0.2px;">Testing-AD.ps1</div>
<div class="ab" style="left:99px;top:927px;width:12px;height:2px;border:1px solid #c5c5c0;border-bottom:none"></div>
<div class="t" style="left:378px;top:351.67px;font-size:12.5px;line-height:20px;color:#6aad7e;font-weight:normal;font-style:normal;letter-spacing:0px;">U</div>
<div class="t" style="left:376px;top:550.67px;font-size:12.5px;line-height:20px;color:#c9ad80;font-weight:bold;font-style:normal;letter-spacing:0px;">M</div>
<div class="ab" style="left:399px;top:51px;width:180px;height:35px;background:#414339"></div>
<div class="ab" style="left:579px;top:51px;width:179px;height:35px;background:#272822"></div>
<div class="ab" style="left:411px;top:63px"><svg class="ps" width="15" height="12" viewBox="0 0 15 12"><defs><linearGradient id="g34" x1="0" y1="1" x2="1" y2="0"><stop offset="0" stop-color="#1f62ae"/><stop offset="0.55" stop-color="#327ccb"/><stop offset="1" stop-color="#74b2e8"/></linearGradient></defs><polygon points="2.3,0 14,0 11.7,10.6 0,10.6" fill="url(#g34)"/><polyline points="5.3,1.5 8,5.3 3.6,8.6" fill="none" stroke="#f4f8ff" stroke-width="1.15" stroke-linecap="round" stroke-linejoin="round"/><line x1="6.6" y1="8.8" x2="9.4" y2="8.8" stroke="#eef" stroke-width="1.1" stroke-linecap="round"/></svg></div>
<div class="t" style="left:432px;top:59.50px;font-size:13px;line-height:20px;color:#c8c8c3;font-weight:normal;font-style:normal;letter-spacing:-0.35px;">Example-Tables3.ps1</div>
<div class="ab" style="left:591px;top:63px"><svg class="ps" width="15" height="12" viewBox="0 0 15 12"><defs><linearGradient id="g35" x1="0" y1="1" x2="1" y2="0"><stop offset="0" stop-color="#1f62ae"/><stop offset="0.55" stop-color="#327ccb"/><stop offset="1" stop-color="#74b2e8"/></linearGradient></defs><polygon points="2.3,0 14,0 11.7,10.6 0,10.6" fill="url(#g35)"/><polyline points="5.3,1.5 8,5.3 3.6,8.6" fill="none" stroke="#f4f8ff" stroke-width="1.15" stroke-linecap="round" stroke-linejoin="round"/><line x1="6.6" y1="8.8" x2="9.4" y2="8.8" stroke="#eef" stroke-width="1.1" stroke-linecap="round"/></svg></div>
<div class="t" style="left:612px;top:59.50px;font-size:13px;line-height:20px;color:#f8f8f2;font-weight:normal;font-style:italic;letter-spacing:-0.35px;">Example-Tables6.ps1</div>
<div class="ab" style="left:739px;top:64px"><svg width="10" height="10" viewBox="0 0 10 10"><path d="M1.5 1.5 L8.5 8.5 M8.5 1.5 L1.5 8.5" stroke="#f0f0ea" stroke-width="2"/></svg></div>
<div class="ab" style="left:1227px;top:62px"><svg width="15" height="15" viewBox="0 0 17 17"><path d="M4.5 3 V1 H10 L12.5 3.5 V6" fill="none" stroke="#c5c5c0" stroke-width="1.1"/><path d="M7 4 H1 V15.5 H6" fill="none" stroke="#c5c5c0" stroke-width="1.1"/><circle cx="9.5" cy="9.5" r="3.3" fill="none" stroke="#3e9ae6" stroke-width="1.5"/><line x1="11.8" y1="11.8" x2="15" y2="15" stroke="#3e9ae6" stroke-width="1.8"/></svg></div>
<div class="ab" style="left:1259px;top:62px"><svg width="14" height="15" viewBox="0 0 14 15"><polygon points="1,1 12.5,7.5 1,14" fill="#c5c5c0"/></svg></div>
<div class="ab" style="left:1288px;top:60px"><svg width="18" height="18" viewBox="0 0 18 18"><path d="M9 0.8 L17.2 9 L9 17.2 L0.8 9 Z" fill="#c5c5c0"/><path d="M6.5 4 L10.2 7.7 M9.3 7 V13 M10.2 7.7 L12.5 10" stroke="#1e1f1c" stroke-width="1.4"/><circle cx="9.3" cy="7.5" r="1.4" fill="#1e1f1c"/><circle cx="9.3" cy="13" r="1.4" fill="#1e1f1c"/></svg></div>
<div class="ab" style="left:1322px;top:63px;width:14px;height:12.5px;border:1.5px solid #c5c5c0;border-top-width:2.5px"><div style="position:absolute;left:4.5px;top:0;width:1.5px;height:10px;background:#c5c5c0"></div></div>
<div class="ab" style="left:1353px;top:66.5px"><svg width="14" height="4" viewBox="0 0 14 4"><circle cx="2" cy="2" r="1.6" fill="#c5c5c0"/><circle cx="7" cy="2" r="1.6" fill="#c5c5c0"/><circle cx="12" cy="2" r="1.6" fill="#c5c5c0"/></svg></div>
<div class="ab" style="left:464px;top:770px;width:915px;height:18px;background:#3e3d32"></div>
<div class="ab" style="left:1364px;top:86px;width:1px;height:761px;background:#464741"></div>
<div class="ab" style="left:1365px;top:373px;width:13px;height:2px;background:#d0d0cb"></div>
<div class="ab c" style="left:0;top:0;width:1379px;height:846px;overflow:hidden">
<div class="m" style="left:396px;top:86.81px;font-size:12px;line-height:18px;color:#90908a;letter-spacing:-0.06px;width:42px;text-align:right;-webkit-text-stroke:0">  1</div>
<div class="m" style="left:464px;top:86.81px;font-size:12px;line-height:18px;color:#f8f8f2;letter-spacing:-0.06px;"><span class="cm">### prepare data</span></div>
<div class="m" style="left:396px;top:104.81px;font-size:12px;line-height:18px;color:#90908a;letter-spacing:-0.06px;width:42px;text-align:right;-webkit-text-stroke:0">  2</div>
<div class="m" style="left:464px;top:104.81px;font-size:12px;line-height:18px;color:#f8f8f2;letter-spacing:-0.06px;"><span class="p">$</span>hash <span class="p">=</span> [<span class="b i">ordered</span>] <span class="p">@</span>{}</div>
<div class="m" style="left:396px;top:122.81px;font-size:12px;line-height:18px;color:#90908a;letter-spacing:-0.06px;width:42px;text-align:right;-webkit-text-stroke:0">  3</div>
<div class="m" style="left:464px;top:122.81px;font-size:12px;line-height:18px;color:#f8f8f2;letter-spacing:-0.06px;"><span class="p">$</span>hash<span class="g">.add</span>(<span class="y">&quot;HQ-1&quot;</span><span class="p">,</span> <span class="y">&quot;5.54.546&quot;</span>)</div>
<div class="m" style="left:396px;top:140.81px;font-size:12px;line-height:18px;color:#90908a;letter-spacing:-0.06px;width:42px;text-align:right;-webkit-text-stroke:0">  4</div>
<div class="m" style="left:464px;top:140.81px;font-size:12px;line-height:18px;color:#f8f8f2;letter-spacing:-0.06px;"><span class="p">$</span>hash<span class="g">.add</span>(<span class="y">&quot;EUR-1&quot;</span><span class="p">,</span> <span class="y">&quot;6.0.0.1&quot;</span>)</div>
<div class="m" style="left:396px;top:158.81px;font-size:12px;line-height:18px;color:#90908a;letter-spacing:-0.06px;width:42px;text-align:right;-webkit-text-stroke:0">  5</div>
<div class="m" style="left:464px;top:158.81px;font-size:12px;line-height:18px;color:#f8f8f2;letter-spacing:-0.06px;"><span class="p">$</span>hash<span class="g">.add</span>(<span class="y">&quot;HQ-2&quot;</span><span class="p">,</span> <span class="y">&quot;5.6&quot;</span>)</div>
<div class="m" style="left:396px;top:176.81px;font-size:12px;line-height:18px;color:#90908a;letter-spacing:-0.06px;width:42px;text-align:right;-webkit-text-stroke:0">  6</div>
<div class="m" style="left:464px;top:176.81px;font-size:12px;line-height:18px;color:#f8f8f2;letter-spacing:-0.06px;"><span class="p">$</span>hash<span class="g">.add</span>(<span class="y">&quot;EUR-2&quot;</span><span class="p">,</span> <span class="y">&quot;6.1.5&quot;</span>)</div>
<div class="m" style="left:396px;top:194.81px;font-size:12px;line-height:18px;color:#90908a;letter-spacing:-0.06px;width:42px;text-align:right;-webkit-text-stroke:0">  7</div>
<div class="m" style="left:464px;top:194.81px;font-size:12px;line-height:18px;color:#f8f8f2;letter-spacing:-0.06px;"><span class="p">$</span>hash<span class="g">.add</span>(<span class="y">&quot;EUR-3&quot;</span><span class="p">,</span> <span class="y">&quot;6.2&quot;</span>)</div>
<div class="m" style="left:396px;top:212.81px;font-size:12px;line-height:18px;color:#90908a;letter-spacing:-0.06px;width:42px;text-align:right;-webkit-text-stroke:0">  8</div>
<div class="m" style="left:464px;top:212.81px;font-size:12px;line-height:18px;color:#f8f8f2;letter-spacing:-0.06px;"></div>
<div class="m" style="left:396px;top:230.81px;font-size:12px;line-height:18px;color:#90908a;letter-spacing:-0.06px;width:42px;text-align:right;-webkit-text-stroke:0">  9</div>
<div class="m" style="left:464px;top:230.81px;font-size:12px;line-height:18px;color:#f8f8f2;letter-spacing:-0.06px;"><span class="p">$</span>hash1 <span class="p">=</span> <span class="p">@</span>{}</div>
<div class="m" style="left:396px;top:248.81px;font-size:12px;line-height:18px;color:#90908a;letter-spacing:-0.06px;width:42px;text-align:right;-webkit-text-stroke:0"> 10</div>
<div class="m" style="left:464px;top:248.81px;font-size:12px;line-height:18px;color:#f8f8f2;letter-spacing:-0.06px;"><span class="p">$</span>hash1<span class="g">.add</span>(<span class="y">&quot;HQ-1&quot;</span><span class="p">,</span> <span class="y">&quot;5.54.546&quot;</span>)</div>
<div class="m" style="left:396px;top:266.81px;font-size:12px;line-height:18px;color:#90908a;letter-spacing:-0.06px;width:42px;text-align:right;-webkit-text-stroke:0"> 11</div>
<div class="m" style="left:464px;top:266.81px;font-size:12px;line-height:18px;color:#f8f8f2;letter-spacing:-0.06px;"><span class="p">$</span>hash1<span class="g">.add</span>(<span class="y">&quot;EUR-1&quot;</span><span class="p">,</span> <span class="y">&quot;6.0.0.1&quot;</span>)</div>
<div class="m" style="left:396px;top:284.81px;font-size:12px;line-height:18px;color:#90908a;letter-spacing:-0.06px;width:42px;text-align:right;-webkit-text-stroke:0"> 12</div>
<div class="m" style="left:464px;top:284.81px;font-size:12px;line-height:18px;color:#f8f8f2;letter-spacing:-0.06px;"><span class="p">$</span>hash1<span class="g">.add</span>(<span class="y">&quot;HQ-2&quot;</span><span class="p">,</span> <span class="y">&quot;5.6&quot;</span>)</div>
<div class="m" style="left:396px;top:302.81px;font-size:12px;line-height:18px;color:#90908a;letter-spacing:-0.06px;width:42px;text-align:right;-webkit-text-stroke:0"> 13</div>
<div class="m" style="left:464px;top:302.81px;font-size:12px;line-height:18px;color:#f8f8f2;letter-spacing:-0.06px;"><span class="p">$</span>hash1<span class="g">.add</span>(<span class="y">&quot;EUR-2&quot;</span><span class="p">,</span> <span class="y">&quot;6.1.5&quot;</span>)</div>
<div class="m" style="left:396px;top:320.81px;font-size:12px;line-height:18px;color:#90908a;letter-spacing:-0.06px;width:42px;text-align:right;-webkit-text-stroke:0"> 14</div>
<div class="m" style="left:464px;top:320.81px;font-size:12px;line-height:18px;color:#f8f8f2;letter-spacing:-0.06px;"><span class="p">$</span>hash1<span class="g">.add</span>(<span class="y">&quot;EUR-3&quot;</span><span class="p">,</span> <span class="y">&quot;6.2&quot;</span>)</div>
<div class="m" style="left:396px;top:338.81px;font-size:12px;line-height:18px;color:#90908a;letter-spacing:-0.06px;width:42px;text-align:right;-webkit-text-stroke:0"> 15</div>
<div class="m" style="left:464px;top:338.81px;font-size:12px;line-height:18px;color:#f8f8f2;letter-spacing:-0.06px;"></div>
<div class="m" style="left:396px;top:356.81px;font-size:12px;line-height:18px;color:#90908a;letter-spacing:-0.06px;width:42px;text-align:right;-webkit-text-stroke:0"> 16</div>
<div class="m" style="left:464px;top:356.81px;font-size:12px;line-height:18px;color:#f8f8f2;letter-spacing:-0.06px;"><span class="p">$</span>hash2 <span class="p">=</span> <span class="p">@</span>{}</div>
<div class="m" style="left:396px;top:374.81px;font-size:12px;line-height:18px;color:#90908a;letter-spacing:-0.06px;width:42px;text-align:right;-webkit-text-stroke:0"> 17</div>
<div class="m" style="left:464px;top:374.81px;font-size:12px;line-height:18px;color:#f8f8f2;letter-spacing:-0.06px;"><span class="p">$</span>hash2<span class="g">.add</span>(<span class="y">&quot;HQ-1&quot;</span><span class="p">,</span> <span class="y">&quot;5.54.546&quot;</span>)</div>
<div class="m" style="left:396px;top:392.81px;font-size:12px;line-height:18px;color:#90908a;letter-spacing:-0.06px;width:42px;text-align:right;-webkit-text-stroke:0"> 18</div>
<div class="m" style="left:464px;top:392.81px;font-size:12px;line-height:18px;color:#f8f8f2;letter-spacing:-0.06px;"></div>
<div class="m" style="left:396px;top:410.81px;font-size:12px;line-height:18px;color:#90908a;letter-spacing:-0.06px;width:42px;text-align:right;-webkit-text-stroke:0"> 19</div>
<div class="m" style="left:464px;top:410.81px;font-size:12px;line-height:18px;color:#f8f8f2;letter-spacing:-0.06px;"><span class="p">$</span>obj <span class="p">=</span> <span class="b">New-Object</span> System.Object</div>
<div class="m" style="left:396px;top:428.81px;font-size:12px;line-height:18px;color:#90908a;letter-spacing:-0.06px;width:42px;text-align:right;-webkit-text-stroke:0"> 20</div>
<div class="m" style="left:464px;top:428.81px;font-size:12px;line-height:18px;color:#f8f8f2;letter-spacing:-0.06px;"><span class="p">$</span>obj <span class="p">|</span> <span class="b">Add-Member</span> <span class="p">-</span>type NoteProperty <span class="p">-</span>name Name <span class="p">-</span>Value <span class="y">&quot;Ryan_PC&quot;</span></div>
<div class="m" style="left:396px;top:446.81px;font-size:12px;line-height:18px;color:#90908a;letter-spacing:-0.06px;width:42px;text-align:right;-webkit-text-stroke:0"> 21</div>
<div class="m" style="left:464px;top:446.81px;font-size:12px;line-height:18px;color:#f8f8f2;letter-spacing:-0.06px;"><span class="p">$</span>obj <span class="p">|</span> <span class="b">Add-Member</span> <span class="p">-</span>type NoteProperty <span class="p">-</span>name Manufacturer <span class="p">-</span>Value <span class="y">&quot;Dell&quot;</span></div>
<div class="m" style="left:396px;top:464.81px;font-size:12px;line-height:18px;color:#90908a;letter-spacing:-0.06px;width:42px;text-align:right;-webkit-text-stroke:0"> 22</div>
<div class="m" style="left:464px;top:464.81px;font-size:12px;line-height:18px;color:#f8f8f2;letter-spacing:-0.06px;"><span class="p">$</span>obj <span class="p">|</span> <span class="b">Add-Member</span> <span class="p">-</span>type NoteProperty <span class="p">-</span>name ProcessorSpeed <span class="p">-</span>Value <span class="y">&quot;3 Ghz&quot;</span></div>
<div class="m" style="left:396px;top:482.81px;font-size:12px;line-height:18px;color:#90908a;letter-spacing:-0.06px;width:42px;text-align:right;-webkit-text-stroke:0"> 23</div>
<div class="m" style="left:464px;top:482.81px;font-size:12px;line-height:18px;color:#f8f8f2;letter-spacing:-0.06px;"><span class="p">$</span>obj <span class="p">|</span> <span class="b">Add-Member</span> <span class="p">-</span>type NoteProperty <span class="p">-</span>name Memory <span class="p">-</span>Value <span class="y">&quot;6 GB&quot;</span></div>
<div class="m" style="left:396px;top:500.81px;font-size:12px;line-height:18px;color:#90908a;letter-spacing:-0.06px;width:42px;text-align:right;-webkit-text-stroke:0"> 24</div>
<div class="m" style="left:464px;top:500.81px;font-size:12px;line-height:18px;color:#f8f8f2;letter-spacing:-0.06px;"></div>
<div class="m" style="left:396px;top:518.81px;font-size:12px;line-height:18px;color:#90908a;letter-spacing:-0.06px;width:42px;text-align:right;-webkit-text-stroke:0"> 25</div>
<div class="m" style="left:464px;top:518.81px;font-size:12px;line-height:18px;color:#f8f8f2;letter-spacing:-0.06px;"><span class="p">$</span>myObject2 <span class="p">=</span> <span class="b">New-Object</span> System.Object</div>
<div class="m" style="left:396px;top:536.81px;font-size:12px;line-height:18px;color:#90908a;letter-spacing:-0.06px;width:42px;text-align:right;-webkit-text-stroke:0"> 26</div>
<div class="m" style="left:464px;top:536.81px;font-size:12px;line-height:18px;color:#f8f8f2;letter-spacing:-0.06px;"><span class="p">$</span>myObject2 <span class="p">|</span> <span class="b">Add-Member</span> <span class="p">-</span>type NoteProperty <span class="p">-</span>name Name <span class="p">-</span>Value <span class="y">&quot;Doug_PC&quot;</span></div>
<div class="m" style="left:396px;top:554.81px;font-size:12px;line-height:18px;color:#90908a;letter-spacing:-0.06px;width:42px;text-align:right;-webkit-text-stroke:0"> 27</div>
<div class="m" style="left:464px;top:554.81px;font-size:12px;line-height:18px;color:#f8f8f2;letter-spacing:-0.06px;"><span class="p">$</span>myObject2 <span class="p">|</span> <span class="b">Add-Member</span> <span class="p">-</span>type NoteProperty <span class="p">-</span>name Manufacturer <span class="p">-</span>Value <span class="y">&quot;HP&quot;</span></div>
<div class="m" style="left:396px;top:572.81px;font-size:12px;line-height:18px;color:#90908a;letter-spacing:-0.06px;width:42px;text-align:right;-webkit-text-stroke:0"> 28</div>
<div class="m" style="left:464px;top:572.81px;font-size:12px;line-height:18px;color:#f8f8f2;letter-spacing:-0.06px;"><span class="p">$</span>myObject2 <span class="p">|</span> <span class="b">Add-Member</span> <span class="p">-</span>type NoteProperty <span class="p">-</span>name ProcessorSpeed <span class="p">-</span>Value <span class="y">&quot;2.6 Ghz&quot;</span></div>
<div class="m" style="left:396px;top:590.81px;font-size:12px;line-height:18px;color:#90908a;letter-spacing:-0.06px;width:42px;text-align:right;-webkit-text-stroke:0"> 29</div>
<div class="m" style="left:464px;top:590.81px;font-size:12px;line-height:18px;color:#f8f8f2;letter-spacing:-0.06px;"><span class="p">$</span>myObject2 <span class="p">|</span> <span class="b">Add-Member</span> <span class="p">-</span>type NoteProperty <span class="p">-</span>name Memory <span class="p">-</span>Value <span class="y">&quot;4 GB&quot;</span></div>
<div class="m" style="left:396px;top:608.81px;font-size:12px;line-height:18px;color:#90908a;letter-spacing:-0.06px;width:42px;text-align:right;-webkit-text-stroke:0"> 30</div>
<div class="m" style="left:464px;top:608.81px;font-size:12px;line-height:18px;color:#f8f8f2;letter-spacing:-0.06px;"></div>
<div class="m" style="left:396px;top:626.81px;font-size:12px;line-height:18px;color:#90908a;letter-spacing:-0.06px;width:42px;text-align:right;-webkit-text-stroke:0"> 31</div>
<div class="m" style="left:464px;top:626.81px;font-size:12px;line-height:18px;color:#f8f8f2;letter-spacing:-0.06px;"><span class="p">$</span>myObject3 <span class="p">=</span> <span class="b">New-Object</span> System.Object</div>
<div class="m" style="left:396px;top:644.81px;font-size:12px;line-height:18px;color:#90908a;letter-spacing:-0.06px;width:42px;text-align:right;-webkit-text-stroke:0"> 32</div>
<div class="m" style="left:464px;top:644.81px;font-size:12px;line-height:18px;color:#f8f8f2;letter-spacing:-0.06px;"><span class="p">$</span>myObject3 <span class="p">|</span> <span class="b">Add-Member</span> <span class="p">-</span>type NoteProperty <span class="p">-</span>name Name <span class="p">-</span>Value <span class="y">&quot;Julie_PC&quot;</span></div>
<div class="m" style="left:396px;top:662.81px;font-size:12px;line-height:18px;color:#90908a;letter-spacing:-0.06px;width:42px;text-align:right;-webkit-text-stroke:0"> 33</div>
<div class="m" style="left:464px;top:662.81px;font-size:12px;line-height:18px;color:#f8f8f2;letter-spacing:-0.06px;"><span class="p">$</span>myObject3 <span class="p">|</span> <span class="b">Add-Member</span> <span class="p">-</span>type NoteProperty <span class="p">-</span>name Manufacturer <span class="p">-</span>Value <span class="y">&quot;Compaq&quot;</span></div>
<div class="m" style="left:396px;top:680.81px;font-size:12px;line-height:18px;color:#90908a;letter-spacing:-0.06px;width:42px;text-align:right;-webkit-text-stroke:0"> 34</div>
<div class="m" style="left:464px;top:680.81px;font-size:12px;line-height:18px;color:#f8f8f2;letter-spacing:-0.06px;"><span class="p">$</span>myObject3 <span class="p">|</span> <span class="b">Add-Member</span> <span class="p">-</span>type NoteProperty <span class="p">-</span>name ProcessorSpeed <span class="p">-</span>Value <span class="y">&quot;2.0 Ghz&quot;</span></div>
<div class="m" style="left:396px;top:698.81px;font-size:12px;line-height:18px;color:#90908a;letter-spacing:-0.06px;width:42px;text-align:right;-webkit-text-stroke:0"> 35</div>
<div class="m" style="left:464px;top:698.81px;font-size:12px;line-height:18px;color:#f8f8f2;letter-spacing:-0.06px;"><span class="p">$</span>myObject3 <span class="p">|</span> <span class="b">Add-Member</span> <span class="p">-</span>type NoteProperty <span class="p">-</span>name Memory <span class="p">-</span>Value <span class="y">&quot;2.5 GB&quot;</span></div>
<div class="m" style="left:396px;top:716.81px;font-size:12px;line-height:18px;color:#90908a;letter-spacing:-0.06px;width:42px;text-align:right;-webkit-text-stroke:0"> 36</div>
<div class="m" style="left:464px;top:716.81px;font-size:12px;line-height:18px;color:#f8f8f2;letter-spacing:-0.06px;"></div>
<div class="m" style="left:396px;top:734.81px;font-size:12px;line-height:18px;color:#90908a;letter-spacing:-0.06px;width:42px;text-align:right;-webkit-text-stroke:0"> 37</div>
<div class="m" style="left:464px;top:734.81px;font-size:12px;line-height:18px;color:#f8f8f2;letter-spacing:-0.06px;"><span class="p">$</span>myArray <span class="p">=</span> <span class="p">@</span>(<span class="p">$</span>obj<span class="p">,</span> <span class="p">$</span>myobject2<span class="p">,</span> <span class="p">$</span>myObject3)</div>
<div class="m" style="left:396px;top:752.81px;font-size:12px;line-height:18px;color:#90908a;letter-spacing:-0.06px;width:42px;text-align:right;-webkit-text-stroke:0"> 38</div>
<div class="m" style="left:464px;top:752.81px;font-size:12px;line-height:18px;color:#f8f8f2;letter-spacing:-0.06px;"><span class="cm">### prepare data end</span></div>
<div class="m" style="left:396px;top:770.81px;font-size:12px;line-height:18px;color:#c2c2bf;letter-spacing:-0.06px;width:42px;text-align:right;-webkit-text-stroke:0"> 39</div>
<div class="m" style="left:464px;top:770.81px;font-size:12px;line-height:18px;color:#f8f8f2;letter-spacing:-0.06px;">      <span style="color:#5f5e55;padding-left:3.5px">You, a day ago • Table data - needs ordering fix for hashtables</span></div>
<div class="m" style="left:396px;top:788.81px;font-size:12px;line-height:18px;color:#90908a;letter-spacing:-0.06px;width:42px;text-align:right;-webkit-text-stroke:0"> 40</div>
<div class="m" style="left:464px;top:788.81px;font-size:12px;line-height:18px;color:#f8f8f2;letter-spacing:-0.06px;"><span class="b">Import-Module</span> PSWriteWord <span class="cm">#-Force</span></div>
<div class="m" style="left:396px;top:806.81px;font-size:12px;line-height:18px;color:#90908a;letter-spacing:-0.06px;width:42px;text-align:right;-webkit-text-stroke:0"> 41</div>
<div class="m" style="left:464px;top:806.81px;font-size:12px;line-height:18px;color:#f8f8f2;letter-spacing:-0.06px;"><span class="p">$</span>FilePath <span class="p">=</span> <span class="y">&quot;</span><span class="p">$</span>Env:USERPROFILE<span class="y">\Desktop\PSWriteWord-Example-Tables6.docx&quot;</span></div>
<div class="m" style="left:396px;top:824.81px;font-size:12px;line-height:18px;color:#90908a;letter-spacing:-0.06px;width:42px;text-align:right;-webkit-text-stroke:0"> 42</div>
<div class="m" style="left:464px;top:824.81px;font-size:12px;line-height:18px;color:#f8f8f2;letter-spacing:-0.06px;"></div>
<div class="m" style="left:396px;top:842.81px;font-size:12px;line-height:18px;color:#90908a;letter-spacing:-0.06px;width:42px;text-align:right;-webkit-text-stroke:0"> 43</div>
<div class="m" style="left:464px;top:842.81px;font-size:12px;line-height:18px;color:#f8f8f2;letter-spacing:-0.06px;"><span class="p">$</span>WordDocument <span class="p">=</span> <span class="b">New-WordDocument</span> <span class="p">$</span>FilePath</div>
</div>
<div class="t" style="left:435px;top:856.19px;font-size:11px;line-height:20px;color:#75715e;font-weight:normal;font-style:normal;letter-spacing:0px;">PROBLEMS</div>
<div class="t" style="left:529px;top:856.19px;font-size:11px;line-height:20px;color:#75715e;font-weight:normal;font-style:normal;letter-spacing:0px;">OUTPUT</div>
<div class="t" style="left:610px;top:856.19px;font-size:11px;line-height:20px;color:#f8f8f2;font-weight:normal;font-style:normal;letter-spacing:0px;">TERMINAL</div>
<div class="ab" style="left:610px;top:879px;width:55px;height:1px;background:#75715e"></div>
<div class="ab" style="left:399px;top:848px;width:979px;height:125px;overflow:hidden">
</div>
<div class="m" style="left:419px;top:886.59px;font-size:12.83px;line-height:18px;color:#e6e6e2;letter-spacing:0px;width:959px;overflow:hidden;-webkit-text-stroke:0">PS C:\Users\pklys\OneDrive - Evotec\Support\GitHub\PSWriteWord\Examples&gt; c:\Users\pklys\OneDrive - Evotec\Support\GitHub\PSWriteWord\E</div>
<div class="m" style="left:419px;top:903.59px;font-size:12.83px;line-height:18px;color:#e6e6e2;letter-spacing:0px;-webkit-text-stroke:0">xamples\Example-Tables6.ps1</div>
<div class="m" style="left:419px;top:954.59px;font-size:12.83px;line-height:18px;color:#e6e6e2;letter-spacing:0px;-webkit-text-stroke:0">PS C:\Users\pklys\OneDrive - Evotec\Support\GitHub\PSWriteWord\Examples&gt; </div>
<div class="ab" style="left:981px;top:954px;width:8px;height:17px;border:1px solid #f8f8f2"></div>
<div class="ab" style="left:1008px;top:856px;width:170px;height:21px;background:#414339"></div>
<div class="t" style="left:1013px;top:856.50px;font-size:13px;line-height:20px;color:#e8e8e4;font-weight:normal;font-style:normal;letter-spacing:0px;">2: PowerShell Integrated</div>
<div class="ab" style="left:1164px;top:861px"><svg width="8" height="8" viewBox="0 0 8 8"><polygon points="1,1 7,1 4,6.5" fill="#f0f0ea"/></svg></div>
<div class="ab" style="left:1196px;top:860px"><svg width="12" height="12" viewBox="0 0 12 12"><path d="M6 0.5 V11.5 M0.5 6 H11.5" stroke="#c5c5c0" stroke-width="2.2"/></svg></div>
<div class="ab" style="left:1227px;top:860px;width:14px;height:12px;border:1.5px solid #c5c5c0;border-top-width:2.5px"><div style="position:absolute;left:4.5px;top:0;width:1.5px;height:10px;background:#c5c5c0"></div></div>
<div class="ab" style="left:1259px;top:858px"><svg width="13" height="16" viewBox="0 0 13 16"><path d="M0.5 3 H12.5 M4.5 3 V1 H8.5 V3" fill="none" stroke="#c5c5c0" stroke-width="1.2"/><path d="M2 4.5 H11 V15 H2 Z" fill="#c5c5c0"/><path d="M4.5 6 V13.5 M6.5 6 V13.5 M8.5 6 V13.5" stroke="#272822" stroke-width="1"/></svg></div>
<div class="ab" style="left:1290px;top:861px"><svg width="14" height="9" viewBox="0 0 14 9"><path d="M1 7.5 L7 1.5 L13 7.5" fill="none" stroke="#c5c5c0" stroke-width="1.8"/></svg></div>
<div class="ab" style="left:1322px;top:860px;width:14px;height:12.5px;border:1.5px solid #c5c5c0"><div style="position:absolute;left:5.5px;top:0;width:5.5px;height:11px;background:#c5c5c0"></div></div>
<div class="ab" style="left:1354px;top:862px"><svg width="10" height="10" viewBox="0 0 10 10"><path d="M1 1 L9 9 M9 1 L1 9" stroke="#c5c5c0" stroke-width="2.4"/></svg></div>
<div class="ab" style="left:14px;top:977px"><svg width="12" height="14" viewBox="0 0 12 14"><circle cx="3.4" cy="3.2" r="1.7" fill="none" stroke="#f0f0ea" stroke-width="1.3"/><circle cx="9" cy="5" r="1.7" fill="none" stroke="#f0f0ea" stroke-width="1.3"/><circle cx="3.4" cy="12" r="1.7" fill="none" stroke="#f0f0ea" stroke-width="1.3"/><path d="M3.4 4.9 V10.3 M9 6.7 C9 9.2 4 8.8 3.5 10.3" fill="none" stroke="#f0f0ea" stroke-width="1.4"/></svg></div>
<div class="t" style="left:28px;top:974.84px;font-size:12px;line-height:20px;color:#f0f0ea;font-weight:normal;font-style:normal;letter-spacing:-0.3px;">master*</div>
<div class="ab" style="left:83px;top:978.5px"><svg width="13" height="12" viewBox="0 0 15 14"><path d="M2.3 6 A5.3 5.3 0 0 1 12 4.2 M12.7 8.5 A5.3 5.3 0 0 1 3 10.3" fill="none" stroke="#f0f0ea" stroke-width="2"/><polygon points="13.8,0.5 13.8,6.2 8.3,6.2" fill="#f0f0ea"/><polygon points="1.2,13.5 1.2,7.8 6.7,7.8" fill="#f0f0ea"/></svg></div>
<div class="ab" style="left:107.5px;top:979px"><svg width="12" height="12" viewBox="0 0 12 12"><circle cx="6" cy="6" r="5.6" fill="#f0f0ea"/><path d="M3.7 3.7 L8.3 8.3 M8.3 3.7 L3.7 8.3" stroke="#414339" stroke-width="1.7"/></svg></div>
<div class="t" style="left:122px;top:974.84px;font-size:12px;line-height:20px;color:#f0f0ea;font-weight:normal;font-style:normal;letter-spacing:-0.3px;">0</div>
<div class="ab" style="left:133.5px;top:979px"><svg width="12" height="12" viewBox="0 0 12 12"><polygon points="6,0.3 11.7,11.3 0.3,11.3" fill="#f0f0ea"/><path d="M6 3.8 V7.8 M6 8.9 V10.3" stroke="#414339" stroke-width="1.5"/></svg></div>
<div class="t" style="left:149px;top:974.84px;font-size:12px;line-height:20px;color:#f0f0ea;font-weight:normal;font-style:normal;letter-spacing:-0.3px;">0</div>
<div class="ab" style="left:166px;top:975px"><svg width="11" height="18" viewBox="0 0 11 18"><circle cx="5" cy="3.5" r="2.3" fill="none" stroke="#f0f0ea" stroke-width="1.3"/><path d="M2.3 7.5 H7.7 V12 H6.6 V17 H3.4 V12 H2.3 Z" fill="none" stroke="#f0f0ea" stroke-width="1.3"/></svg></div>
<div class="t" style="left:178px;top:974.84px;font-size:12px;line-height:20px;color:#f0f0ea;font-weight:normal;font-style:normal;letter-spacing:-0.3px;">Przemysław</div>
<div class="ab" style="left:253px;top:977px"><svg width="14" height="14" viewBox="0 0 14 14"><path d="M6 1.5 H1 V13 H12.5 V8" fill="none" stroke="#f0f0ea" stroke-width="1.4"/><path d="M6 8 L12.5 1.5 M8 1.2 H13 V6" fill="none" stroke="#f0f0ea" stroke-width="1.6"/></svg></div>
<div class="t" style="left:268px;top:974.84px;font-size:12px;line-height:20px;color:#f0f0ea;font-weight:normal;font-style:normal;letter-spacing:-0.3px;">Share</div>
<div class="t" style="left:313px;top:974.84px;font-size:12px;line-height:20px;color:#f0f0ea;font-weight:normal;font-style:normal;letter-spacing:0.1px;">Auto Attach: Off</div>
<div class="ab" style="left:859px;top:979px"><svg width="14" height="10" viewBox="0 0 14 10"><circle cx="7" cy="5" r="2.8" fill="none" stroke="#f0f0ea" stroke-width="1.6"/><path d="M0.5 5 H4 M10 5 H13.5" stroke="#f0f0ea" stroke-width="1.6"/></svg></div>
<div class="t" style="left:875px;top:974.84px;font-size:12px;line-height:20px;color:#f0f0ea;font-weight:normal;font-style:normal;letter-spacing:-0.3px;">You, a day ago</div>
<div class="t" style="left:973px;top:974.84px;font-size:12px;line-height:20px;color:#f0f0ea;font-weight:normal;font-style:normal;letter-spacing:-0.3px;">Ln 39, Col 1</div>
<div class="t" style="left:1049px;top:974.84px;font-size:12px;line-height:20px;color:#f0f0ea;font-weight:normal;font-style:normal;letter-spacing:-0.3px;">Spaces: 4</div>
<div class="t" style="left:1113px;top:974.84px;font-size:12px;line-height:20px;color:#f0f0ea;font-weight:normal;font-style:normal;letter-spacing:-0.3px;">UTF-8</div>
<div class="t" style="left:1159px;top:974.84px;font-size:12px;line-height:20px;color:#f0f0ea;font-weight:normal;font-style:normal;letter-spacing:-0.3px;">CRLF</div>
<div class="t" style="left:1201px;top:974.84px;font-size:12px;line-height:20px;color:#f0f0ea;font-weight:normal;font-style:normal;letter-spacing:-0.3px;">PowerShell</div>
<div class="ab" style="left:1273px;top:978px;width:13px;height:12px;border:1.3px solid #89d185"><svg style="position:absolute;left:0.5px;top:0.5px" width="10" height="9" viewBox="0 0 11 9"><path d="M1.5 1.5 L4.5 4.2 L1.5 7 M5.5 7.5 H9.5" fill="none" stroke="#89d185" stroke-width="1.3"/></svg></div>
<div class="t" style="left:1292px;top:974.84px;font-size:12px;line-height:20px;color:#89d185;font-weight:normal;font-style:normal;letter-spacing:-0.3px;">5.1</div>
<div class="ab" style="left:1320px;top:976px"><svg width="17" height="17" viewBox="0 0 17 17"><circle cx="8.5" cy="8.5" r="8" fill="#f0f0ea"/><circle cx="6" cy="6.3" r="1.2" fill="#414339"/><circle cx="11" cy="6.3" r="1.2" fill="#414339"/><path d="M4.2 9.5 Q8.5 14.5 12.8 9.5" fill="none" stroke="#414339" stroke-width="1.4"/></svg></div>
<div class="ab" style="left:1350px;top:976px"><svg width="15" height="16" viewBox="0 0 15 16"><path d="M7.5 1 Q12 1 12 6.5 V10.5 L14 13 H1 L3 10.5 V6.5 Q3 1 7.5 1 Z" fill="#f0f0ea"/><path d="M5.5 14 Q7.5 16.5 9.5 14 Z" fill="#f0f0ea"/></svg></div>
</body></html>
